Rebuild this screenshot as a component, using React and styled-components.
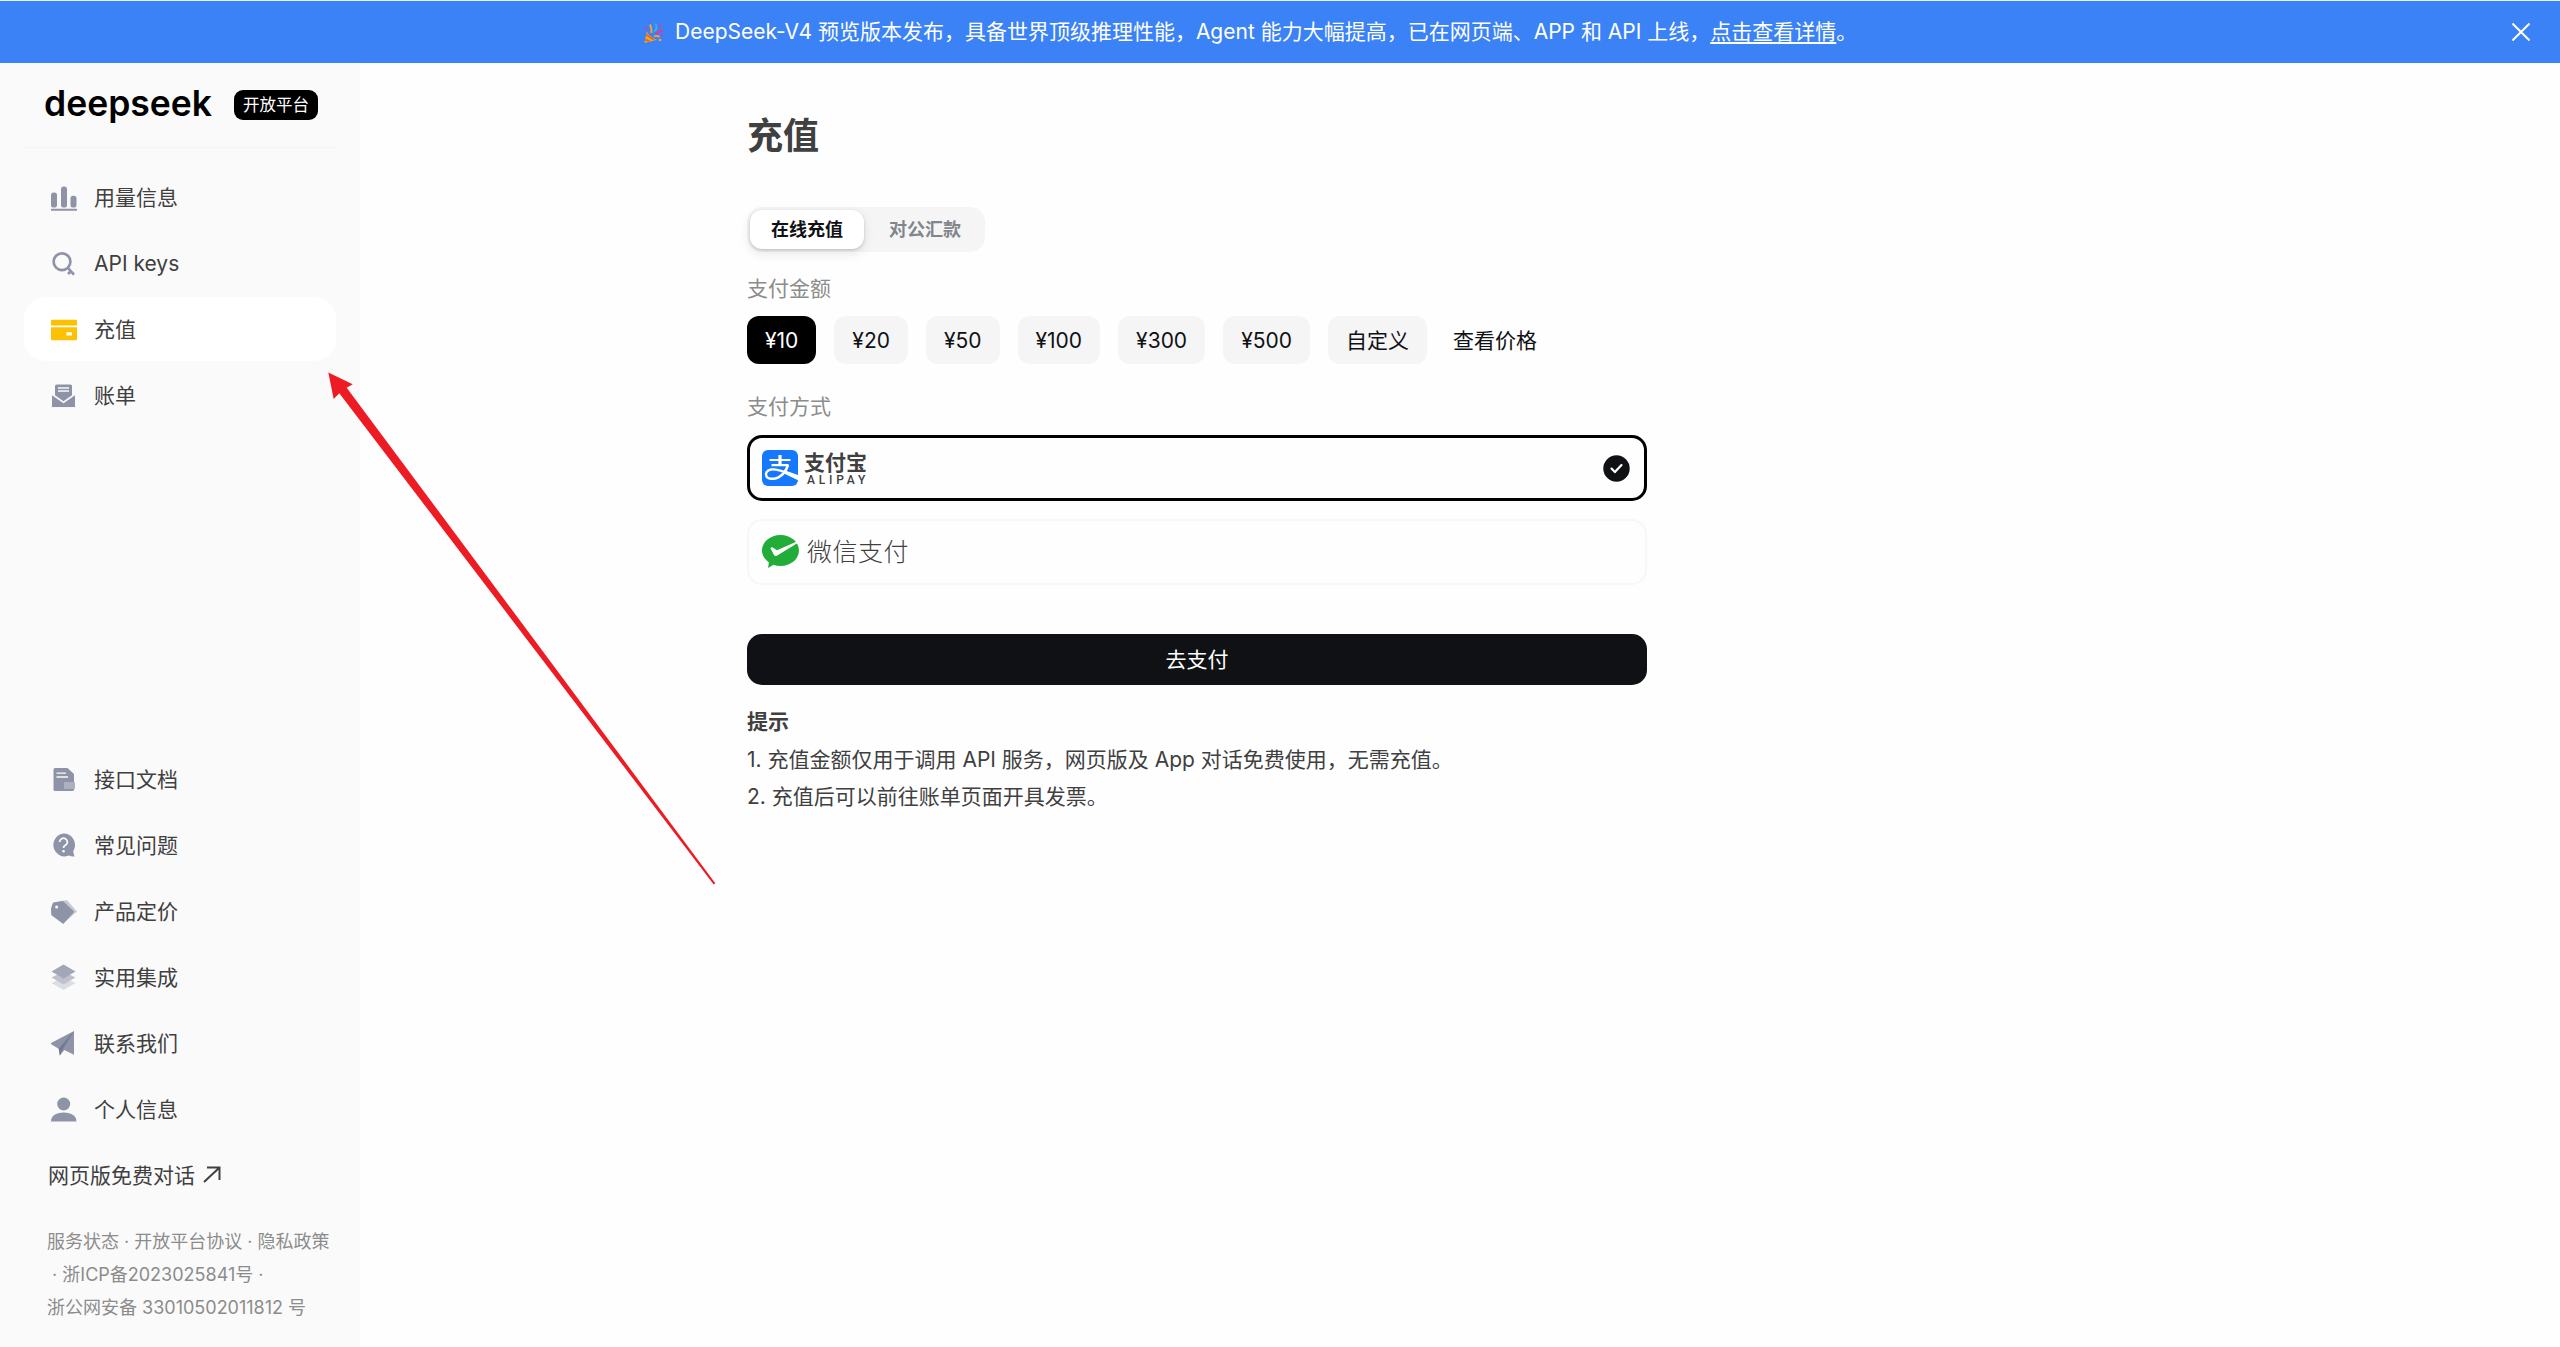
import React, { useState } from "react";
import styled, { createGlobalStyle } from "styled-components";

const GlobalStyle = createGlobalStyle`
  * {
    box-sizing: border-box;
  }
  body {
    margin: 0;
    background: #fefefe;
    color: #404040;
    font-family: Inter, "Noto Sans CJK SC", sans-serif;
    font-size: 21px;
    font-weight: 400;
  }
  button {
    font: inherit;
    border: none;
    cursor: pointer;
  }
  a {
    color: inherit;
  }
`;

const Page = styled.div`
  position: relative;
  display: flex;
  flex-direction: column;
  height: 1347px;
  overflow: hidden;
`;

const Banner = styled.header`
  display: flex;
  align-items: center;
  justify-content: space-between;
  height: 63px;
  padding: 0 30px 0 642px;
  border-top: 1px solid #e8f0fe;
  background: #3b82f6;
  color: #fff;
`;

const BannerText = styled.div`
  display: flex;
  align-items: center;
  gap: 9px;
  line-height: 32px;
  white-space: nowrap;
  a {
    text-decoration: underline;
    text-decoration-thickness: 2px;
    text-underline-offset: 3px;
  }
`;

const CloseButton = styled.button`
  display: flex;
  padding: 0;
  background: none;
  color: #fff;
`;

const Body = styled.div`
  display: flex;
  flex: 1;
`;

const Sidebar = styled.aside`
  display: flex;
  flex-direction: column;
  width: 360px;
  padding: 0 24px;
  background: #fafafa;
`;

const Brand = styled.div`
  display: flex;
  align-items: center;
  gap: 21px;
  height: 85px;
  padding: 0 0 0 20px;
  border-bottom: 1px solid #f5f5f5;
`;

const Wordmark = styled.svg`
  width: 169px;
  height: 49px;
  color: #000;
  font-family: Inter, sans-serif;
  font-size: 36px;
  font-weight: 600;
`;

const Badge = styled.span`
  height: 30px;
  padding: 0 9px;
  border-radius: 9px;
  background: #000;
  color: #fff;
  font-size: 16.5px;
  line-height: 30px;
`;

const Nav = styled.nav`
  display: flex;
  flex-direction: column;
  gap: 2px;
  margin-top: ${(props) => props.$top};
`;

const NavItem = styled.a`
  display: flex;
  align-items: center;
  gap: 15px;
  height: 64px;
  padding-left: 25px;
  border-radius: 22px;
  background: ${(props) => (props.$active ? "#fff" : "transparent")};
  color: #404040;
  line-height: 29px;
  text-decoration: none;
  cursor: pointer;
`;

const NavIcon = styled.svg`
  width: 30px;
  height: 30px;
  margin-top: 1px;
  color: #8f93a8;
`;

const ChatLink = styled.a`
  display: flex;
  align-items: center;
  gap: 8px;
  height: 66px;
  padding-left: 24px;
  svg {
    margin-top: 1px;
  }
`;

const Legal = styled.div`
  margin-top: 18px;
  padding-left: 23px;
  color: #8c8c8c;
  font-size: 18px;
  line-height: 33px;
  white-space: pre;
`;

const Main = styled.main`
  width: 1287px;
  padding: 46px 0 0 387px;
`;

const Title = styled.h1`
  margin: 0;
  font-size: 36px;
  font-weight: 700;
  line-height: 54px;
`;

const Tabs = styled.div`
  display: flex;
  gap: 4px;
  width: fit-content;
  height: 45px;
  margin-top: 44px;
  padding: 3px;
  border-radius: 15px;
  background: #f5f5f5;
`;

const Tab = styled.button`
  padding: 0 21px;
  border-radius: 12px;
  background: ${(props) => (props.$active ? "#fff" : "transparent")};
  box-shadow: ${(props) => (props.$active ? "0 1px 3px rgba(0, 0, 0, 0.16), 0 4px 12px rgba(0, 0, 0, 0.1)" : "none")};
  color: ${(props) => (props.$active ? "#101114" : "#81858c")};
  font-size: 18px;
  font-weight: 700;
  line-height: 39px;
`;

const Label = styled.div`
  margin-top: ${(props) => props.$top};
  color: #8c8c8c;
  line-height: 32px;
`;

const Amounts = styled.div`
  display: flex;
  gap: 18px;
  margin-top: 11px;
`;

const Amount = styled.button`
  height: 48px;
  padding: 0 ${(props) => (props.$plain ? "8px" : "18px")};
  border-radius: 12px;
  background: ${(props) => (props.$plain ? "none" : props.$active ? "#000" : "#f5f5f5")};
  color: ${(props) => (props.$active ? "#fff" : "#101114")};
  line-height: 47px;
`;

const Method = styled.div`
  display: flex;
  align-items: center;
  justify-content: space-between;
  height: 66px;
  margin-top: ${(props) => props.$top};
  padding: 0 ${(props) => (props.$active ? "14px 0 12px" : "16px 0 13px")};
  border: ${(props) => (props.$active ? "3px solid #000" : "2px solid #f7f7f7")};
  border-radius: 15px;
`;

const MethodBrand = styled.div`
  display: flex;
  align-items: center;
  gap: ${(props) => props.$gap};
`;

const AlipayName = styled.div`
  display: flex;
  flex-direction: column;
  font-size: 21px;
  font-weight: 700;
  line-height: 23px;
  small {
    padding-left: 3px;
    font-family: Roboto, sans-serif;
    font-size: 12px;
    font-weight: 500;
    letter-spacing: 3.8px;
    line-height: 12px;
  }
`;

const WechatName = styled.span`
  font-size: 25px;
  font-weight: 300;
  letter-spacing: 0.5px;
  line-height: 36px;
`;

const PayButton = styled.button`
  width: 100%;
  height: 51px;
  margin-top: 49px;
  border-radius: 15px;
  background: #101114;
  color: #fff;
  line-height: 49px;
`;

const Tips = styled.div`
  margin-top: 18px;
  line-height: 37.5px;
  white-space: nowrap;
`;

const Pointer = styled.svg`
  position: absolute;
  left: 328px;
  top: 372px;
  pointer-events: none;
`;

const icons = {
  usage: (
    <g fill="currentColor">
      <rect x="2" y="9.5" width="6" height="15" rx="2.6" />
      <rect x="12" y="3.4" width="6" height="21.2" rx="2.6" />
      <rect x="21.5" y="12.8" width="6" height="11.8" rx="2.6" />
      <rect x="2" y="25.8" width="26" height="2" rx="0.6" />
    </g>
  ),
  keys: (
    <g fill="none" stroke="currentColor" strokeWidth="2.7">
      <circle cx="13" cy="12.7" r="8.4" />
      <path d="M18.6 18.6 25 25.6M22 22l-3 3" />
    </g>
  ),
  topup: (
    <g fill="#fdc103">
      <path d="M3 4.8h24a1 1 0 0 1 1 1v4.6H2V5.800a1 1 0 0 1 1-1z" />
      <path fillRule="evenodd" d="M2 12.200h26V24a1.200 1.200 0 0 1-1.200 1.200H3.200A1.200 1.200 0 0 1 2 24zM17.400 17.200v3.200h5.600v-3.200z" />
    </g>
  ),
  bills: (
    <g>
      <path fill="currentColor" d="M7.500 3.400h14a1.500 1.500 0 0 1 1.500 1.500v9.300l-8.500 6-8.500-6V4.900a1.500 1.500 0 0 1 1.500-1.500z" />
      <path stroke="#fafafa" strokeWidth="1.300" d="M9 7h11M9 10h11" />
      <path
        fill="currentColor"
        stroke="#fafafa"
        strokeWidth="1"
        d="M2.500 13.400l12 8.400 12-8.400v12a1.200 1.200 0 0 1-1.200 1.200H3.700a1.200 1.200 0 0 1-1.200-1.200z"
      />
    </g>
  ),
  docs: (
    <g>
      <path fill="currentColor" d="M6 3h12.500l6.500 6v15.500A1.500 1.500 0 0 1 23.500 26H6a1.500 1.500 0 0 1-1.500-1.500v-20A1.500 1.500 0 0 1 6 3z" />
      <path stroke="#fafafa" strokeWidth="1.300" d="M7.500 8.200H17M7.500 12H19" />
      <rect x="15" y="17" width="11" height="7" rx="0.8" fill="#adb0bf" />
    </g>
  ),
  faq: (
    <g>
      <path fill="currentColor" d="M14.500 2.500A11.500 11.500 0 0 1 24.200 20.200c.2 2 .8 3.600 1.300 5.300-2 .2-3.800-.1-5.400-.9A11.500 11.500 0 1 1 14.500 2.500z" />
      <path fill="none" stroke="#fafafa" strokeWidth="1.800" d="M10.600 10.900a3.900 3.700 0 1 1 5.900 3.200c-1.300.8-2 1.400-2 3" />
      <circle cx="14.500" cy="20.200" r="1.300" fill="#fafafa" />
    </g>
  ),
  pricing: (
    <g>
      <path fill="#c7c9d4" d="M12 4l5-.8a2 2 0 0 1 1.600.5L28 14.500 17 24z" />
      <path fill="currentColor" d="M5.500 5.200l7.300-1.100a2 2 0 0 1 1.700.5l10 9.500a1 1 0 0 1 .1 1.400L14.300 27 2.800 18.500a1.500 1.500 0 0 1-.6-1.400L2 11.500l1.600-5a2 2 0 0 1 1.900-1.300z" />
      <circle cx="7.600" cy="10" r="1.500" fill="#fafafa" />
    </g>
  ),
  integrations: (
    <g>
      <path fill="#dcdde4" d="M2.500 20l12-6 12 6-12 7z" />
      <path fill="#bfc1cd" d="M2.500 14.500l12-6 12 6-12 7z" />
      <path fill="#a3a6b6" d="M2.500 8.500l12-7 12 7-12 7z" />
    </g>
  ),
  contact: (
    <g>
      <path fill="currentColor" d="M25 2 2.500 13.800c-.6.4-.6 1.200 0 1.600l7.200 4.300 1.200 6.800 4.400-5.400 9.700 4.700z" />
      <path fill="#747a94" d="M25 2 9.700 19.700l1.200 6.800 3.100-6.500z" />
    </g>
  ),
  profile: (
    <g fill="currentColor">
      <circle cx="14.700" cy="9" r="6.500" />
      <path d="M2 26.500c0-5.500 4.500-9 12.700-9s12.700 3.500 12.700 9z" />
    </g>
  ),
};

const mainNav = [
  { key: "usage", text: "用量信息" },
  { key: "keys", text: "API keys" },
  { key: "topup", text: "充值" },
  { key: "bills", text: "账单" },
];

const moreNav = [
  { key: "docs", text: "接口文档" },
  { key: "faq", text: "常见问题" },
  { key: "pricing", text: "产品定价" },
  { key: "integrations", text: "实用集成" },
  { key: "contact", text: "联系我们" },
  { key: "profile", text: "个人信息" },
];

const amounts = ["¥10", "¥20", "¥50", "¥100", "¥300", "¥500", "自定义"];

const NavList = ({ items, active, onSelect, top }) => (
  <Nav $top={top}>
    {items.map(({ key, text }) => (
      <NavItem key={key} $active={active === key} onClick={() => onSelect(key)}>
        <NavIcon viewBox="0 0 30 30">{icons[key]}</NavIcon>
        {text}
      </NavItem>
    ))}
  </Nav>
);

const PartyIcon = () => (
  <svg width="24" height="28" viewBox="0 0 24 28">
    <path fill="#f5a623" d="M2.500 25 4.800 13.500c1.500 3.200 5.800 7 10.200 8.300z" />
    <path fill="#e0632e" d="M3.500 20.500l5 2.600-2 .6-3.400-1.300zM4.500 15.500l8 6.200-1.800.4-6.700-4.600z" />
    <path fill="none" stroke="#e8368f" strokeWidth="1.900" d="M14 16.500c1.200-2.500 3.500-3.500 6.500-4.500" />
    <path fill="none" stroke="#35b8e8" strokeWidth="1.700" d="M12 13.500c2.500-1.500 3.300-4 1.500-8" />
    <path fill="none" stroke="#f5a623" strokeWidth="1.900" d="M9.500 15c.3-3 .3-4.800-1.500-8.500M12 18.500c2-1 3.500-1 5.500.5" />
    <g fill="#e8368f">
      <circle cx="4.500" cy="10.500" r="1.300" />
      <circle cx="20" cy="17" r="1.200" />
      <circle cx="18.500" cy="8" r="1.200" />
    </g>
    <circle cx="18" cy="22" r="1.300" fill="#f5a623" />
  </svg>
);

const AlipayIcon = () => (
  <svg width="36" height="36" viewBox="0 0 36 36">
    <rect width="36" height="36" rx="6" fill="#1677ff" />
    <g fill="none" stroke="#fff">
      <path strokeWidth="3.200" d="M18 5v9.500" />
      <path strokeWidth="2.200" d="M7.500 10h21M9.500 15.100h17" />
      <path strokeWidth="2.500" d="M26 15c-1.600 5-5 10-9.500 12.300-4.200 2.200-10.500 2-12-.8-1.500-2.800 0-6.200 4.500-7 6-1 13 2 22 5.500" />
    </g>
    <path fill="#fff" d="M23.500 20.800 36 25v5.200L21.500 23.300z" />
  </svg>
);

const WechatIcon = () => (
  <svg width="37" height="34" viewBox="0 0 37 34">
    <path fill="#22ac38" d="M18.500 0C28.700 0 37 7 37 15.500S28.700 31 18.500 31c-2.500 0-4.800-.4-7-1.200L6.200 33l.6-5.800C2.700 24.400 0 20.200 0 15.500 0 7 8.300 0 18.500 0z" />
    <path fill="#fff" d="M8.500 13.200c.5-1 1.500-1.200 2.500-.5l4 2.500 19.200-8.400 1 1.500L14.800 20.800c-1.200.6-2.200.3-2.800-.8z" />
  </svg>
);

export default function App() {
  const [page, setPage] = useState("topup");
  const [tab, setTab] = useState("online");
  const [amount, setAmount] = useState("¥10");

  return (
    <>
      <GlobalStyle />
      <Page>
        <Banner>
          <BannerText>
            <PartyIcon />
            <span>
              DeepSeek-V4 预览版本发布，具备世界顶级推理性能，Agent 能力大幅提高，已在网页端、APP 和 API 上线，<a>点击查看详情</a>。
            </span>
          </BannerText>
          <CloseButton aria-label="Close">
            <svg width="18" height="18" viewBox="0 0 18 18" stroke="currentColor" strokeWidth="2">
              <path d="M0.500 0.500 17.500 17.500M17.500 0.500 0.500 17.500" />
            </svg>
          </CloseButton>
        </Banner>
        <Body>
          <Sidebar>
            <Brand>
              <Wordmark viewBox="0 -8 169 49">
                <text x="0" y="27" fill="currentColor" textLength="168" lengthAdjust="spacingAndGlyphs">
                  deepseek
                </text>
              </Wordmark>
              <Badge>开放平台</Badge>
            </Brand>
            <NavList items={mainNav} active={page} onSelect={setPage} top="17px" />
            <NavList items={moreNav} active={page} onSelect={setPage} top="320px" />
            <ChatLink>
              网页版免费对话
              <svg width="18" height="18" viewBox="0 0 18 18" fill="none" stroke="currentColor" strokeWidth="2">
                <path d="M1 16 16 2M4 1.500h12.500V14" />
              </svg>
            </ChatLink>
            <Legal>
              <div>服务状态 · 开放平台协议 · 隐私政策</div>
              <div> · 浙ICP备2023025841号 ·</div>
              <div>浙公网安备 33010502011812 号</div>
            </Legal>
          </Sidebar>
          <Main>
            <Title>充值</Title>
            <Tabs>
              <Tab $active={tab === "online"} onClick={() => setTab("online")}>
                在线充值
              </Tab>
              <Tab $active={tab === "bank"} onClick={() => setTab("bank")}>
                对公汇款
              </Tab>
            </Tabs>
            <Label $top="21px">支付金额</Label>
            <Amounts>
              {amounts.map((item) => (
                <Amount key={item} $active={amount === item} onClick={() => setAmount(item)}>
                  {item}
                </Amount>
              ))}
              <Amount $plain>查看价格</Amount>
            </Amounts>
            <Label $top="27px">支付方式</Label>
            <Method $active $top="12px">
              <MethodBrand $gap="6px">
                <AlipayIcon />
                <AlipayName>
                  支付宝
                  <small>ALIPAY</small>
                </AlipayName>
              </MethodBrand>
              <svg width="27" height="27" viewBox="0 0 27 27">
                <circle cx="13.500" cy="13.500" r="13.200" fill="#101114" />
                <path d="M8.500 13.600l3.400 3.500 6.600-7" fill="none" stroke="#fff" strokeWidth="2.200" strokeLinecap="round" strokeLinejoin="round" />
              </svg>
            </Method>
            <Method $top="18px">
              <MethodBrand $gap="8px">
                <WechatIcon />
                <WechatName>微信支付</WechatName>
              </MethodBrand>
            </Method>
            <PayButton>去支付</PayButton>
            <Tips>
              <b>提示</b>
              <div>1. 充值金额仅用于调用 API 服务，网页版及 App 对话免费使用，无需充值。</div>
              <div>2. 充值后可以前往账单页面开具发票。</div>
            </Tips>
          </Main>
        </Body>
        <Pointer width="388" height="513" viewBox="0 0 388 513">
          <path fill="#ed1c24" d="M.3.500 24.700 12.300 18.700 15.700 387.300 511.200 385.700 512.500 11.300 21.300 5.700 27z" />
        </Pointer>
      </Page>
    </>
  );
}
